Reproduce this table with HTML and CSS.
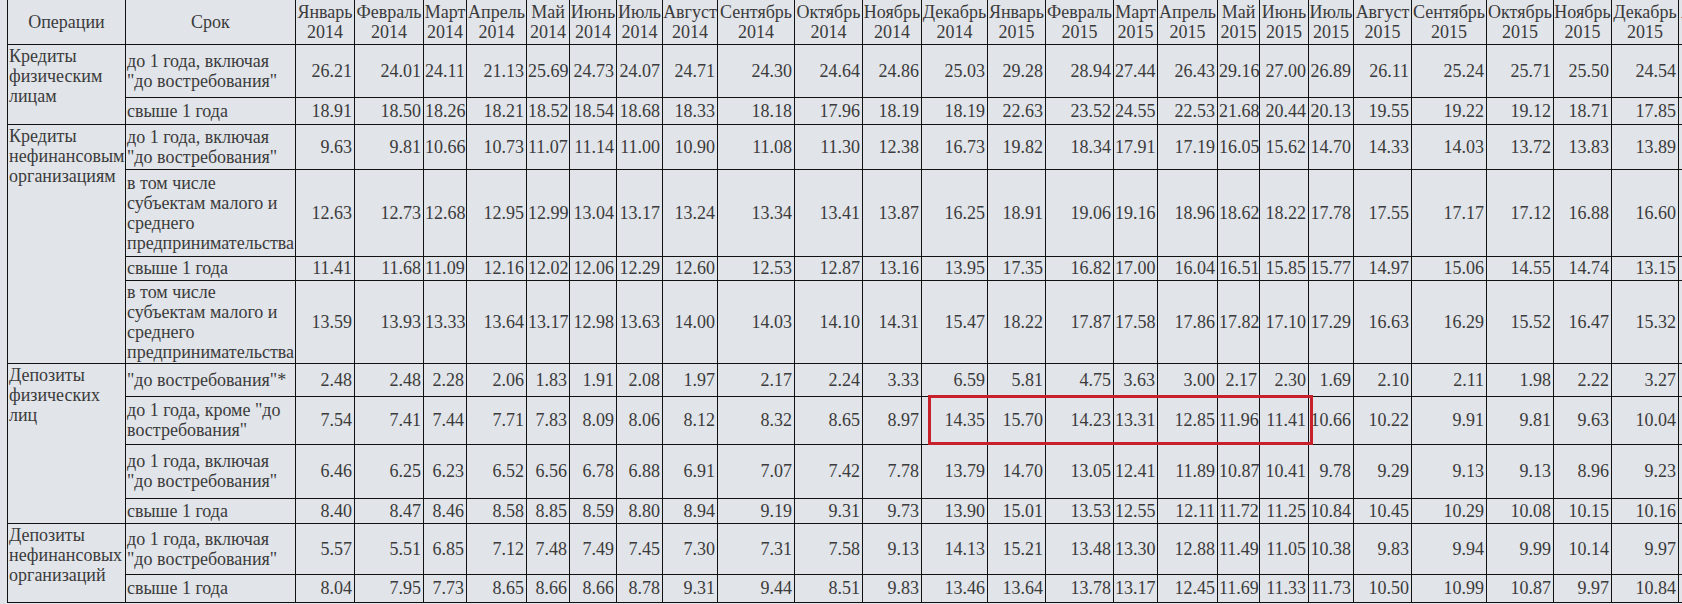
FILE: index.html
```html
<!DOCTYPE html>
<html lang="ru">
<head>
<meta charset="utf-8">
<title>Ставки</title>
<link rel="stylesheet" href="styles.css">
</head>
<body>
<div class="wrap">
<table class="rates">
<thead>
<tr>
<th class="w118">Операции</th><th class="w170">Срок</th>
<th class="w59">Январь<br>2014</th><th class="w69">Февраль<br>2014</th><th class="w43">Март<br>2014</th><th class="w60">Апрель<br>2014</th><th class="w43">Май<br>2014</th><th class="w47">Июнь<br>2014</th><th class="w46">Июль<br>2014</th><th class="w55">Август<br>2014</th><th class="w77">Сентябрь<br>2014</th><th class="w68">Октябрь<br>2014</th><th class="w59">Ноябрь<br>2014</th><th class="w66">Декабрь<br>2014</th>
<th class="w58">Январь<br>2015</th><th class="w68">Февраль<br>2015</th><th class="w44">Март<br>2015</th><th class="w60">Апрель<br>2015</th><th class="w42">Май<br>2015</th><th class="w49">Июнь<br>2015</th><th class="w45">Июль<br>2015</th><th class="w58">Август<br>2015</th><th class="w75">Сентябрь<br>2015</th><th class="w67">Октябрь<br>2015</th><th class="w58">Ноябрь<br>2015</th><th class="w67">Декабрь<br>2015</th>
<th class="w60">Январь<br>2016</th>
</tr>
</thead>
<tbody>
<tr class="h53"><td class="op" rowspan="2">Кредиты физическим лицам</td><td class="term">до 1 года, включая "до востребования"</td><td>26.21</td><td>24.01</td><td>24.11</td><td>21.13</td><td>25.69</td><td>24.73</td><td>24.07</td><td>24.71</td><td>24.30</td><td>24.64</td><td>24.86</td><td>25.03</td><td>29.28</td><td>28.94</td><td>27.44</td><td>26.43</td><td>29.16</td><td>27.00</td><td>26.89</td><td>26.11</td><td>25.24</td><td>25.71</td><td>25.50</td><td>24.54</td><td></td></tr>
<tr class="h27"><td class="term">свыше 1 года</td><td>18.91</td><td>18.50</td><td>18.26</td><td>18.21</td><td>18.52</td><td>18.54</td><td>18.68</td><td>18.33</td><td>18.18</td><td>17.96</td><td>18.19</td><td>18.19</td><td>22.63</td><td>23.52</td><td>24.55</td><td>22.53</td><td>21.68</td><td>20.44</td><td>20.13</td><td>19.55</td><td>19.22</td><td>19.12</td><td>18.71</td><td>17.85</td><td></td></tr>
<tr class="h45"><td class="op" rowspan="4">Кредиты нефинансовым организациям</td><td class="term">до 1 года, включая "до востребования"</td><td>9.63</td><td>9.81</td><td>10.66</td><td>10.73</td><td>11.07</td><td>11.14</td><td>11.00</td><td>10.90</td><td>11.08</td><td>11.30</td><td>12.38</td><td>16.73</td><td>19.82</td><td>18.34</td><td>17.91</td><td>17.19</td><td>16.05</td><td>15.62</td><td>14.70</td><td>14.33</td><td>14.03</td><td>13.72</td><td>13.83</td><td>13.89</td><td></td></tr>
<tr class="h87"><td class="term">в том числе субъектам малого и среднего предпринимательства</td><td>12.63</td><td>12.73</td><td>12.68</td><td>12.95</td><td>12.99</td><td>13.04</td><td>13.17</td><td>13.24</td><td>13.34</td><td>13.41</td><td>13.87</td><td>16.25</td><td>18.91</td><td>19.06</td><td>19.16</td><td>18.96</td><td>18.62</td><td>18.22</td><td>17.78</td><td>17.55</td><td>17.17</td><td>17.12</td><td>16.88</td><td>16.60</td><td></td></tr>
<tr class="h24"><td class="term">свыше 1 года</td><td>11.41</td><td>11.68</td><td>11.09</td><td>12.16</td><td>12.02</td><td>12.06</td><td>12.29</td><td>12.60</td><td>12.53</td><td>12.87</td><td>13.16</td><td>13.95</td><td>17.35</td><td>16.82</td><td>17.00</td><td>16.04</td><td>16.51</td><td>15.85</td><td>15.77</td><td>14.97</td><td>15.06</td><td>14.55</td><td>14.74</td><td>13.15</td><td></td></tr>
<tr class="h82"><td class="term">в том числе субъектам малого и среднего предпринимательства</td><td>13.59</td><td>13.93</td><td>13.33</td><td>13.64</td><td>13.17</td><td>12.98</td><td>13.63</td><td>14.00</td><td>14.03</td><td>14.10</td><td>14.31</td><td>15.47</td><td>18.22</td><td>17.87</td><td>17.58</td><td>17.86</td><td>17.82</td><td>17.10</td><td>17.29</td><td>16.63</td><td>16.29</td><td>15.52</td><td>16.47</td><td>15.32</td><td></td></tr>
<tr class="h33"><td class="op" rowspan="4">Депозиты физических лиц</td><td class="term">"до востребования"*</td><td>2.48</td><td>2.48</td><td>2.28</td><td>2.06</td><td>1.83</td><td>1.91</td><td>2.08</td><td>1.97</td><td>2.17</td><td>2.24</td><td>3.33</td><td>6.59</td><td>5.81</td><td>4.75</td><td>3.63</td><td>3.00</td><td>2.17</td><td>2.30</td><td>1.69</td><td>2.10</td><td>2.11</td><td>1.98</td><td>2.22</td><td>3.27</td><td></td></tr>
<tr class="h48"><td class="term">до 1 года, кроме "до востребования"</td><td>7.54</td><td>7.41</td><td>7.44</td><td>7.71</td><td>7.83</td><td>8.09</td><td>8.06</td><td>8.12</td><td>8.32</td><td>8.65</td><td>8.97</td><td>14.35</td><td>15.70</td><td>14.23</td><td>13.31</td><td>12.85</td><td>11.96</td><td>11.41</td><td>10.66</td><td>10.22</td><td>9.91</td><td>9.81</td><td>9.63</td><td>10.04</td><td></td></tr>
<tr class="h54"><td class="term">до 1 года, включая "до востребования"</td><td>6.46</td><td>6.25</td><td>6.23</td><td>6.52</td><td>6.56</td><td>6.78</td><td>6.88</td><td>6.91</td><td>7.07</td><td>7.42</td><td>7.78</td><td>13.79</td><td>14.70</td><td>13.05</td><td>12.41</td><td>11.89</td><td>10.87</td><td>10.41</td><td>9.78</td><td>9.29</td><td>9.13</td><td>9.13</td><td>8.96</td><td>9.23</td><td></td></tr>
<tr class="h25"><td class="term">свыше 1 года</td><td>8.40</td><td>8.47</td><td>8.46</td><td>8.58</td><td>8.85</td><td>8.59</td><td>8.80</td><td>8.94</td><td>9.19</td><td>9.31</td><td>9.73</td><td>13.90</td><td>15.01</td><td>13.53</td><td>12.55</td><td>12.11</td><td>11.72</td><td>11.25</td><td>10.84</td><td>10.45</td><td>10.29</td><td>10.08</td><td>10.15</td><td>10.16</td><td></td></tr>
<tr class="h51"><td class="op" rowspan="2">Депозиты нефинансовых организаций</td><td class="term">до 1 года, включая "до востребования"</td><td>5.57</td><td>5.51</td><td>6.85</td><td>7.12</td><td>7.48</td><td>7.49</td><td>7.45</td><td>7.30</td><td>7.31</td><td>7.58</td><td>9.13</td><td>14.13</td><td>15.21</td><td>13.48</td><td>13.30</td><td>12.88</td><td>11.49</td><td>11.05</td><td>10.38</td><td>9.83</td><td>9.94</td><td>9.99</td><td>10.14</td><td>9.97</td><td></td></tr>
<tr class="h28"><td class="term">свыше 1 года</td><td>8.04</td><td>7.95</td><td>7.73</td><td>8.65</td><td>8.66</td><td>8.66</td><td>8.78</td><td>9.31</td><td>9.44</td><td>8.51</td><td>9.83</td><td>13.46</td><td>13.64</td><td>13.78</td><td>13.17</td><td>12.45</td><td>11.69</td><td>11.33</td><td>11.73</td><td>10.50</td><td>10.99</td><td>10.87</td><td>9.97</td><td>10.84</td><td></td></tr>
</tbody>
</table>
<div class="highlight"></div>
</div>
</body>
</html>
```

FILE: styles.css
```css
html, body {
  margin: 0;
  padding: 0;
  background: #e1e4e9;
  overflow: hidden;
}

.wrap {
  position: relative;
  padding-left: 7px;
  width: max-content;
}

.rates {
  width: 1731px;
  border-collapse: collapse;
  table-layout: fixed;
  font-family: "Liberation Serif", "Times New Roman", serif;
  font-size: 18px;
  color: #3b3b3b;
  background: #e1e4e9;
}

.rates th,
.rates td {
  box-sizing: border-box;
  border: 1px solid #111;
  padding: 1px 2px 1px 1px;
  font-weight: normal;
  line-height: 20px;
  white-space: nowrap;
}

.rates th {
  border-top: 0;
  text-align: center;
  vertical-align: middle;
  padding: 1px 0;
  height: 44px;
}

.rates td {
  text-align: right;
  vertical-align: middle;
}

.rates td.op {
  text-align: left;
  vertical-align: top;
  white-space: normal;
}

.rates td.term {
  text-align: left;
  white-space: normal;
}

.h24 { height: 24px; }
.h25 { height: 25px; }
.h27 { height: 27px; }
.h28 { height: 28px; }
.h33 { height: 33px; }
.h45 { height: 45px; }
.h48 { height: 48px; }
.h51 { height: 51px; }
.h53 { height: 53px; }
.h54 { height: 54px; }
.h82 { height: 82px; }
.h87 { height: 87px; }

.w42 { width: 42px; }
.w43 { width: 43px; }
.w44 { width: 44px; }
.w45 { width: 45px; }
.w46 { width: 46px; }
.w47 { width: 47px; }
.w49 { width: 49px; }
.w55 { width: 55px; }
.w58 { width: 58px; }
.w59 { width: 59px; }
.w60 { width: 60px; }
.w66 { width: 66px; }
.w67 { width: 67px; }
.w68 { width: 68px; }
.w69 { width: 69px; }
.w75 { width: 75px; }
.w77 { width: 77px; }
.w118 { width: 118px; }
.w170 { width: 170px; }

.highlight {
  position: absolute;
  left: 928px;
  top: 395px;
  width: 385px;
  height: 50px;
  box-sizing: border-box;
  border: 3px solid #c9212b;
}
```
